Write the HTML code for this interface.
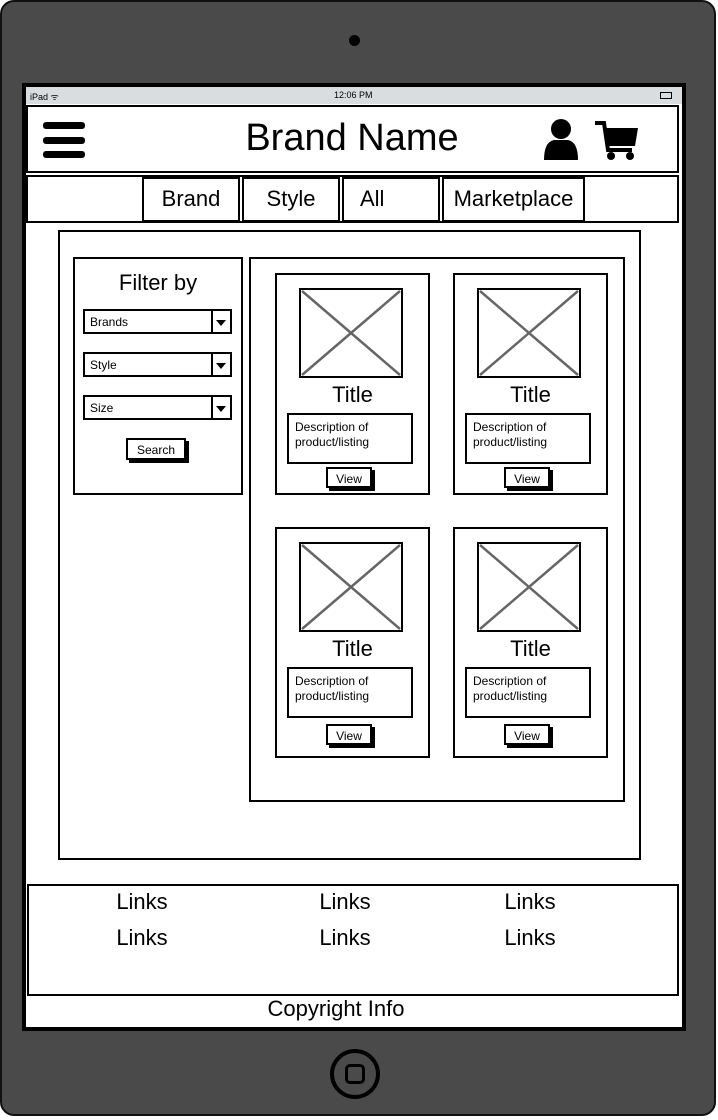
<!DOCTYPE html><html><head><style>
*{margin:0;padding:0;box-sizing:border-box}
body{width:718px;height:1120px;background:#fff;position:relative;overflow:hidden;font-family:"Liberation Sans",sans-serif;color:#000}
.a{position:absolute}
.b{position:absolute;border:2px solid #000;background:#fff}
.t{position:absolute;text-align:center;white-space:nowrap}
.sel{position:absolute;border:2px solid #000;background:#fff;height:25px;font-size:12px;padding:4px 0 0 5px}
.sel:after{content:"";position:absolute;right:0;top:0;width:17px;height:100%;border-left:2px solid #000}
.sel i{position:absolute;right:4px;top:9px;border-left:5px solid transparent;border-right:5px solid transparent;border-top:6px solid #000;z-index:1}
.btn{position:absolute;border:2px solid #000;background:#fff;box-shadow:3px 3px 0 #000;font-size:12px;text-align:center}
</style></head><body>
<div class="a" style="left:0;top:0;width:716px;height:1116px;background:#4a4a4a;border:2px solid #111;border-radius:14px"></div>
<div class="a" style="left:349px;top:35px;width:11px;height:11px;border-radius:50%;background:#000"></div>
<div class="a" style="left:22px;top:83px;width:664px;height:948px;background:#000"></div>
<div class="a" style="left:26px;top:87px;width:656px;height:940px;background:#fff"></div>
<div class="a" style="left:26px;top:87px;width:656px;height:17px;background:#d9dde0;font-size:9px"><span class="a" style="left:4px;top:3px">iPad ᯤ</span><span class="a" style="left:308px;top:3px">12:06 PM</span><span class="a" style="left:634px;top:5px;width:12px;height:7px;border:1px solid #000"></span></div>
<div class="b" style="left:26px;top:105px;width:653px;height:68px"></div>
<div class="a" style="left:43px;top:122px;width:42px;height:7px;background:#000;border-radius:3px"></div>
<div class="a" style="left:43px;top:137px;width:42px;height:7px;background:#000;border-radius:3px"></div>
<div class="a" style="left:43px;top:151px;width:42px;height:7px;background:#000;border-radius:3px"></div>
<div class="t" style="left:200px;top:117px;width:304px;font-size:38px">Brand Name</div>
<svg class="a" style="left:542px;top:118px" width="40" height="44"><circle cx="19" cy="11" r="10"/><path d="M2 42 Q2 24 12 22 L26 22 Q36 24 36 42 Z"/></svg>
<svg class="a" style="left:594px;top:120px" width="46" height="42"><path d="M1 3 H10 L14 30 H38" stroke="#000" stroke-width="4" fill="none"/><path d="M12 8 H44 L41 26 H15 Z"/><circle cx="17" cy="36" r="4"/><circle cx="36" cy="36" r="4"/></svg>
<div class="b" style="left:26px;top:175px;width:653px;height:48px"></div>
<div class="b t" style="left:142px;top:177px;width:98px;height:45px;font-size:22px;padding-top:7px">Brand</div>
<div class="b t" style="left:242px;top:177px;width:98px;height:45px;font-size:22px;padding-top:7px">Style</div>
<div class="b t" style="left:342px;top:177px;width:98px;height:45px;font-size:22px;padding-top:7px;text-align:left;padding-left:16px">All</div>
<div class="b t" style="left:442px;top:177px;width:143px;height:45px;font-size:22px;padding-top:7px">Marketplace</div>
<div class="b" style="left:58px;top:230px;width:583px;height:630px"></div>
<div class="b" style="left:73px;top:257px;width:170px;height:238px"></div>
<div class="t" style="left:73px;top:270px;width:170px;font-size:22px">Filter by</div>
<div class="sel" style="left:83px;top:309px;width:149px">Brands<i></i></div>
<div class="sel" style="left:83px;top:352px;width:149px">Style<i></i></div>
<div class="sel" style="left:83px;top:395px;width:149px">Size<i></i></div>
<div class="btn" style="left:126px;top:438px;width:60px;height:22px;padding-top:3px">Search</div>
<div class="b" style="left:249px;top:257px;width:376px;height:545px"></div>
<div id="cards"></div>
<div class="b" style="left:27px;top:884px;width:652px;height:112px"></div>
<div class="t" style="left:92px;top:889px;width:100px;font-size:22px">Links</div>
<div class="t" style="left:295px;top:889px;width:100px;font-size:22px">Links</div>
<div class="t" style="left:480px;top:889px;width:100px;font-size:22px">Links</div>
<div class="t" style="left:92px;top:925px;width:100px;font-size:22px">Links</div>
<div class="t" style="left:295px;top:925px;width:100px;font-size:22px">Links</div>
<div class="t" style="left:480px;top:925px;width:100px;font-size:22px">Links</div>
<div class="t" style="left:236px;top:996px;width:200px;font-size:22px">Copyright Info</div>
<div class="a" style="left:330px;top:1049px;width:50px;height:50px;border-radius:50%;border:4px solid #000"></div>
<div class="a" style="left:345px;top:1064px;width:20px;height:20px;border-radius:5px;border:3px solid #000"></div>
<script>
var pos=[[275,273,222,194],[453,273,222,194],[275,527,231,197],[453,527,231,197]],h="";
pos.forEach(function(p){var x=p[0],y=p[1],H=p[2],vb=y+p[3];
h+='<div class="b" style="left:'+x+'px;top:'+y+'px;width:155px;height:'+H+'px"></div>'+
'<svg class="a" style="left:'+(x+24)+'px;top:'+(y+15)+'px" width="104" height="90"><rect x="1" y="1" width="102" height="88" fill="#fff" stroke="#000" stroke-width="2"/><path d="M3 3 L101 87 M101 3 L3 87" stroke="#666" stroke-width="2.5"/></svg>'+
'<div class="t" style="left:'+x+'px;top:'+(y+109)+'px;width:155px;font-size:22px">Title</div>'+
'<div class="b" style="left:'+(x+12)+'px;top:'+(y+140)+'px;width:126px;height:51px;font-size:12px;padding:5px 0 0 6px;line-height:15px">Description of<br>product/listing</div>'+
'<div class="btn" style="left:'+(x+51)+'px;top:'+vb+'px;width:46px;height:21px;padding-top:3px">View</div>';});
document.getElementById("cards").outerHTML=h;
</script>
</body></html>
